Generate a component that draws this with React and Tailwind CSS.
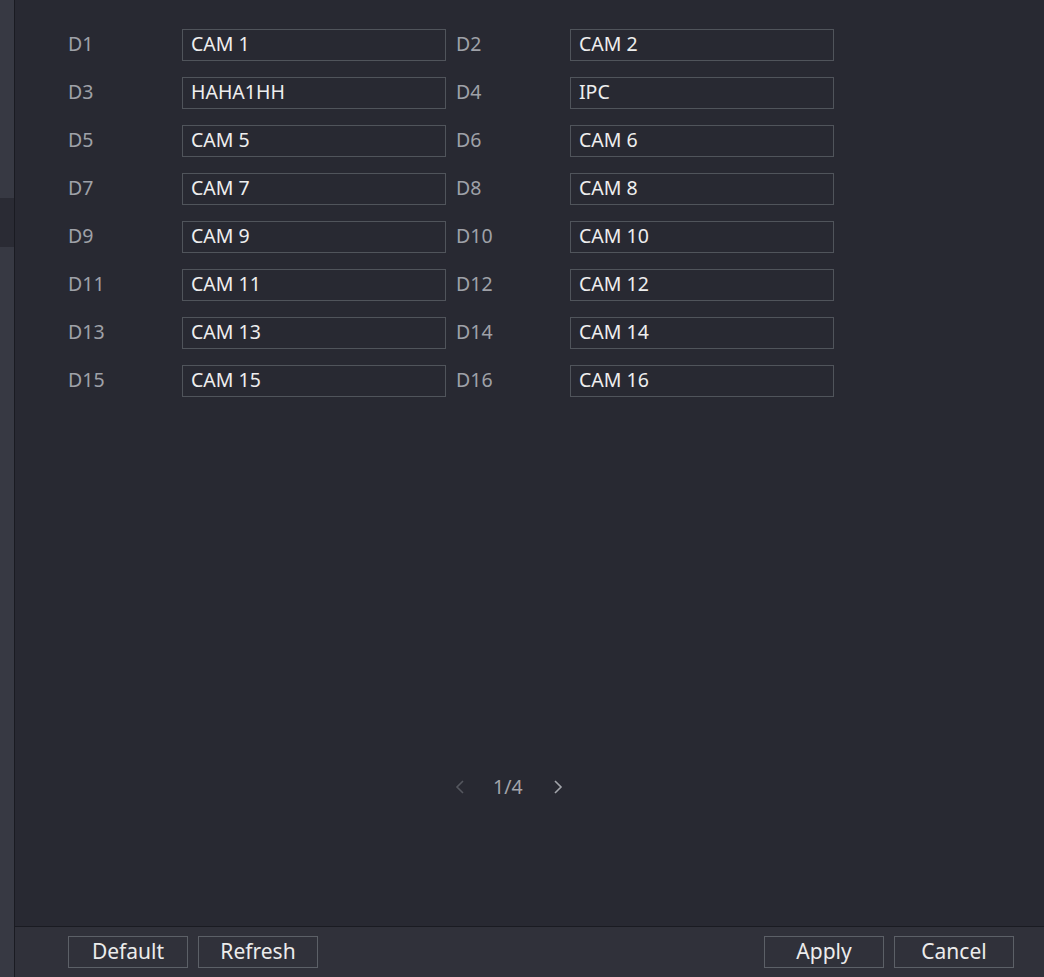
import React from "react";

const rows = [
  ["D1", "CAM 1", "D2", "CAM 2"],
  ["D3", "HAHA1HH", "D4", "IPC"],
  ["D5", "CAM 5", "D6", "CAM 6"],
  ["D7", "CAM 7", "D8", "CAM 8"],
  ["D9", "CAM 9", "D10", "CAM 10"],
  ["D11", "CAM 11", "D12", "CAM 12"],
  ["D13", "CAM 13", "D14", "CAM 14"],
  ["D15", "CAM 15", "D16", "CAM 16"],
];

function Field({ label, value }) {
  return (
    <div className="flex items-center">
      <div className="w-[114px] text-[19.5px] text-[#9fa1a8] leading-none pb-[2px]">{label}</div>
      <div className="w-[264px] h-[32px] border border-[#50545b] flex items-center pl-[8px] pb-[2px] text-[19.5px] text-[#eeeeee] leading-none">
        {value}
      </div>
    </div>
  );
}

function Btn({ children }) {
  return (
    <button className="w-[120px] h-[32px] border border-[#5c6067] flex items-center justify-center text-[21px] text-[#ececec] leading-none pb-[2px]">
      {children}
    </button>
  );
}

export default function App() {
  return (
    <div
      className="w-[1044px] h-[977px] flex bg-[#282932] overflow-hidden"
      style={{ fontFamily: '"Noto Sans", "Open Sans", sans-serif' }}
    >
      <div className="w-[14px] flex flex-col bg-[#373943]">
        <div className="h-[198px]" />
        <div className="h-[49px] bg-[#2a2b34]" />
        <div className="flex-1" />
      </div>
      <div className="w-[1px] bg-[#1a1b22]" />
      <div className="flex-1 flex flex-col">
        <div className="flex-1 pt-[29px] pl-[53px]">
          <div className="flex flex-col gap-[16px]">
            {rows.map((r) => (
              <div key={r[0]} className="flex gap-[10px]">
                <Field label={r[0]} value={r[1]} />
                <Field label={r[2]} value={r[3]} />
              </div>
            ))}
          </div>
          <div className="mt-[378px] flex items-center h-[24px] pl-[387px]">
            <svg width="10" height="14" viewBox="0 0 10 14" className="mr-[28px]">
              <path d="M8 1 L2 7 L8 13" fill="none" stroke="#55575f" strokeWidth="1.6" />
            </svg>
            <span className="text-[19.5px] text-[#a3a5ab] leading-none">1/4</span>
            <svg width="10" height="14" viewBox="0 0 10 14" className="ml-[30px]">
              <path d="M2 1 L8 7 L2 13" fill="none" stroke="#a3a5ab" strokeWidth="1.6" />
            </svg>
          </div>
        </div>
        <div className="h-[1px] bg-[#1a1b22]" />
        <div className="h-[50px] bg-[#30313a] flex items-center pl-[53px] pr-[30px]">
          <div className="flex gap-[10px]">
            <Btn>Default</Btn>
            <Btn>Refresh</Btn>
          </div>
          <div className="flex-1" />
          <div className="flex gap-[10px]">
            <Btn>Apply</Btn>
            <Btn>Cancel</Btn>
          </div>
        </div>
      </div>
    </div>
  );
}
